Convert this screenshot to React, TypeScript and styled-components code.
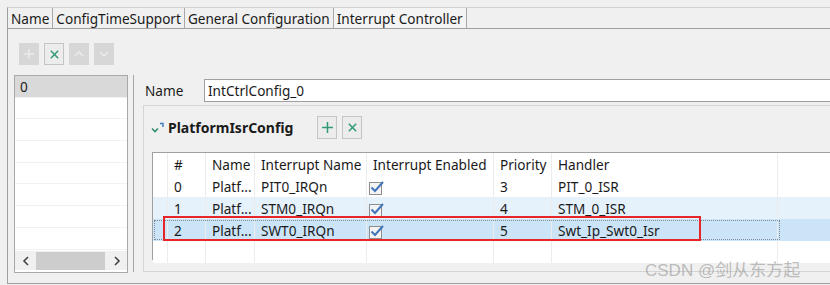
import styled, { createGlobalStyle } from "styled-components";

const GlobalStyle = createGlobalStyle`
  body {
    margin: 0;
    background: #f0f0f0;
    font-family: "Noto Sans", "Open Sans", sans-serif;
    color: #1a1a1a;
  }
`;

const Window = styled.div`
  position: relative;
  width: 830px;
  height: 285px;
  overflow: hidden;
  box-sizing: border-box;
  padding: 7px 0 0 7px;
  background: #f0f0f0;
  font-size: 13.6px;
`;

const TabBar = styled.div`
  display: flex;
  height: 20px;
  border-top: 1px solid #d2d2d2;
  border-left: 1px solid #a0a0a0;
  border-bottom: 1px solid #a0a0a0;
`;

const Tab = styled.div<{ $active?: boolean }>`
  padding: 0 3px;
  line-height: 21px;
  border-right: 1px solid #a8a8a8;
  background: ${({ $active }) => ($active ? "#f4f4f4" : "#f0f0f0")};
  white-space: nowrap;
`;

const Panel = styled.div`
  height: 254px;
  border-left: 1px solid #a0a0a0;
  border-bottom: 1px solid #a0a0a0;
  display: flex;
  flex-direction: column;
`;

const Toolbar = styled.div`
  display: flex;
  gap: 5px;
  padding: 14px 0 0 11px;
`;

const ToolButton = styled.div<{ $enabled?: boolean; $tall?: boolean }>`
  width: 20px;
  height: ${({ $tall }) => ($tall ? "23px" : "22px")};
  box-sizing: border-box;
  display: flex;
  align-items: center;
  justify-content: center;
  background: ${({ $enabled }) => ($enabled ? "#ececec" : "#d7d7d7")};
  border: 1px solid ${({ $enabled }) => ($enabled ? "#c4c4c4" : "#d7d7d7")};
  color: ${({ $enabled }) => ($enabled ? "#2f9a78" : "#ececec")};
`;

const Body = styled.div`
  display: flex;
  margin-top: 10px;
  flex: 1;
  min-height: 0;
`;

const ListBox = styled.div`
  margin-left: 6px;
  width: 114px;
  height: 198px;
  box-sizing: border-box;
  border: 1px solid #a8a8a8;
  background: #fff;
  display: flex;
  flex-direction: column;
`;

const ListRow = styled.div<{ $selected?: boolean }>`
  height: 20.7px;
  flex-shrink: 0;
  border-bottom: 1px solid #f1f1f1;
  padding-left: 5px;
  line-height: 21px;
  background: ${({ $selected }) => ($selected ? "#d9d9d9" : "#fff")};
`;

const HScroll = styled.div`
  margin-top: auto;
  height: 19px;
  display: flex;
  align-items: center;
  background: #f0f0f0;
  margin-bottom: 2px;
`;

const ScrollArrow = styled.div<{ $end?: boolean }>`
  width: 21px;
  display: flex;
  justify-content: center;
  margin-left: ${({ $end }) => ($end ? "auto" : "0")};
`;

const ScrollThumb = styled.div`
  width: 69px;
  height: 18px;
  background: #cdcdcd;
`;

const Splitter = styled.div`
  width: 1px;
  height: 197px;
  margin-left: 5px;
  background: #a4a4a4;
`;

const Editor = styled.div`
  flex: 1;
  margin-left: 9px;
  display: flex;
  flex-direction: column;
  min-width: 0;
`;

const NameRow = styled.div`
  display: flex;
  align-items: center;
  margin-top: 4px;
  height: 23px;
`;

const Label = styled.div`
  width: 59px;
  padding-left: 2px;
`;

const TextInput = styled.div`
  flex: 1;
  height: 23px;
  box-sizing: border-box;
  background: #fff;
  border: 1px solid #a0a0a0;
  border-right: none;
  padding-left: 3px;
  line-height: 21px;
`;

const Group = styled.div`
  margin-top: 3px;
  margin-right: -20px;
  height: 167px;
  box-sizing: border-box;
  border: 1px solid #d4d4d4;
  border-right: none;
  display: flex;
  flex-direction: column;
`;

const GroupHeader = styled.div`
  display: flex;
  align-items: center;
  padding: 10px 0 0 7px;
  height: 23px;
`;

const GroupTitle = styled.div`
  font-weight: 700;
  font-size: 14px;
  margin-left: 1px;
  width: 149px;
`;

const HeaderButtons = styled.div`
  display: flex;
  gap: 5px;
`;

const Table = styled.div`
  position: relative;
  margin: 13px 0 0 8px;
  height: 108px;
  box-sizing: border-box;
  border: 1px solid #a0a0a0;
  border-right: none;
  background: #fff;
`;

const COLUMNS = "15px 38px 49px 112px 127px 58px 226px 1fr";

const Row = styled.div<{ $tone?: "plain" | "hover" | "selected" }>`
  display: grid;
  grid-template-columns: ${COLUMNS};
  height: 22px;
  background: ${({ $tone }) =>
    $tone === "hover" ? "#e5f1fb" : $tone === "selected" ? "#cce4f7" : "#fff"};
  position: relative;
`;

const Cell = styled.div`
  padding-left: 6px;
  line-height: 23px;
  white-space: nowrap;
  overflow: hidden;
  border-right: 1px solid #ececec;
  &:last-child {
    border-right: none;
  }
`;

const FocusRing = styled.div`
  position: absolute;
  left: 1px;
  top: 1px;
  width: 624px;
  bottom: 1px;
  border: 1px dotted #7d8a96;
  pointer-events: none;
`;

const Annotation = styled.div`
  position: absolute;
  left: 10px;
  top: 63px;
  width: 538px;
  height: 25px;
  box-sizing: border-box;
  border: 2px solid #e8262a;
  pointer-events: none;
`;

const Watermark = styled.div`
  position: absolute;
  left: 645px;
  top: 256px;
  font-family: "Liberation Sans", "Noto Sans CJK SC", sans-serif;
  font-size: 17px;
  color: rgba(140, 140, 140, 0.55);
  white-space: nowrap;
`;

const CheckBox = styled.svg`
  display: block;
  margin: 4px 0 0 -5px;
`;

const Icon = ({ kind, size = 12 }: { kind: "plus" | "x" | "up" | "down"; size?: number }) => {
  const d = {
    plus: "M6 1 V11 M1 6 H11",
    x: "M2 2 L10 10 M10 2 L2 10",
    up: "M2 8 L6 4 L10 8",
    down: "M2 4 L6 8 L10 4",
  }[kind];
  return (
    <svg width={size} height={size} viewBox="0 0 12 12" fill="none">
      <path d={d} stroke="currentColor" strokeWidth={kind === "x" ? 1.6 : 1.4} />
    </svg>
  );
};

const CollapseIcon = () => (
  <svg width="16" height="14" viewBox="0 0 16 14" fill="none">
    <path d="M1 7.5 L4 10.5 L7 7.5" stroke="#2d8c6e" strokeWidth="1.6" />
    <path d="M9 2.5 H12 V6" stroke="#3b78c4" strokeWidth="1.4" />
  </svg>
);

const Check = () => (
  <CheckBox width="18" height="16" viewBox="0 0 18 16">
    <rect x="1.5" y="3.5" width="12" height="12" fill="#f4f4f4" stroke="#8e8e8e" />
    <path d="M3.5 8.5 L7 12 L15 3" fill="none" stroke="#3f74b8" strokeWidth="2" />
  </CheckBox>
);

const Chevron = ({ dir }: { dir: "left" | "right" }) => (
  <svg width="8" height="10" viewBox="0 0 8 10">
    <path
      d={dir === "left" ? "M6 1 L2 5 L6 9" : "M2 1 L6 5 L2 9"}
      fill="none"
      stroke="#444"
      strokeWidth="1.6"
    />
  </svg>
);

const rows = [
  { id: "0", irq: "PIT0_IRQn", prio: "3", handler: "PIT_0_ISR", tone: "plain" as const },
  { id: "1", irq: "STM0_IRQn", prio: "4", handler: "STM_0_ISR", tone: "hover" as const },
  { id: "2", irq: "SWT0_IRQn", prio: "5", handler: "Swt_Ip_Swt0_Isr", tone: "selected" as const },
];

export default function App() {
  return (
    <Window>
      <GlobalStyle />
      <TabBar>
        <Tab>Name</Tab>
        <Tab>ConfigTimeSupport</Tab>
        <Tab>General Configuration</Tab>
        <Tab $active>Interrupt Controller</Tab>
      </TabBar>
      <Panel>
        <Toolbar>
          <ToolButton><Icon kind="plus" /></ToolButton>
          <ToolButton $enabled><Icon kind="x" size={11} /></ToolButton>
          <ToolButton><Icon kind="up" /></ToolButton>
          <ToolButton><Icon kind="down" /></ToolButton>
        </Toolbar>
        <Body>
          <ListBox>
            <ListRow $selected>0</ListRow>
            {Array.from({ length: 7 }).map((_, i) => (
              <ListRow key={i} />
            ))}
            <HScroll>
              <ScrollArrow>
                <Chevron dir="left" />
              </ScrollArrow>
              <ScrollThumb />
              <ScrollArrow $end>
                <Chevron dir="right" />
              </ScrollArrow>
            </HScroll>
          </ListBox>
          <Splitter />
          <Editor>
            <NameRow>
              <Label>Name</Label>
              <TextInput>IntCtrlConfig_0</TextInput>
            </NameRow>
            <Group>
              <GroupHeader>
                <CollapseIcon />
                <GroupTitle>PlatformIsrConfig</GroupTitle>
                <HeaderButtons>
                  <ToolButton $enabled $tall>
                    <Icon kind="plus" size={13} />
                  </ToolButton>
                  <ToolButton $enabled $tall>
                    <Icon kind="x" size={11} />
                  </ToolButton>
                </HeaderButtons>
              </GroupHeader>
              <Table>
                <Row>
                  <Cell />
                  <Cell>#</Cell>
                  <Cell>Name</Cell>
                  <Cell>Interrupt Name</Cell>
                  <Cell>Interrupt Enabled</Cell>
                  <Cell>Priority</Cell>
                  <Cell>Handler</Cell>
                  <Cell />
                </Row>
                {rows.map((r) => (
                  <Row key={r.id} $tone={r.tone}>
                    <Cell />
                    <Cell>{r.id}</Cell>
                    <Cell>Platf...</Cell>
                    <Cell>{r.irq}</Cell>
                    <Cell>
                      <Check />
                    </Cell>
                    <Cell>{r.prio}</Cell>
                    <Cell>{r.handler}</Cell>
                    <Cell />
                    {r.tone === "selected" && <FocusRing />}
                  </Row>
                ))}
                <Row>
                  {Array.from({ length: 8 }).map((_, i) => (
                    <Cell key={i} />
                  ))}
                </Row>
                <Annotation />
              </Table>
            </Group>
          </Editor>
        </Body>
      </Panel>
      <Watermark>CSDN @剑从东方起</Watermark>
    </Window>
  );
}
